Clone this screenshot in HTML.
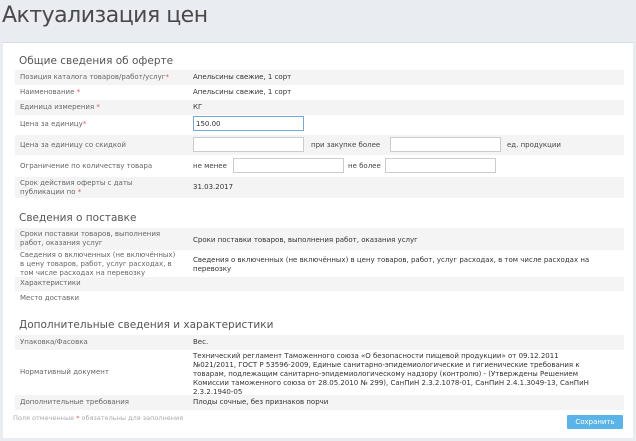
<!DOCTYPE html>
<html><head><meta charset="utf-8"><style>
*{margin:0;padding:0;box-sizing:border-box}
body{width:636px;height:441px;overflow:hidden;background:#e9ecf0;font-family:"DejaVu Sans","Liberation Sans",sans-serif;color:#555;position:relative}
h1{position:absolute;left:2px;top:3px;font-size:22px;font-weight:normal;color:#4a4a4a;font-family:"DejaVu Sans",sans-serif;letter-spacing:-0.5px}
.panel{position:absolute;left:3px;top:42px;width:630px;height:396px;background:#fff;border-top:1px solid #d8dbe0}
.a{position:absolute}
.sec{position:absolute;left:19px;font-size:10.5px;color:#555}
.row{position:absolute;left:15px;width:609px}
.g{background:#f4f4f4}
.l{position:absolute;left:5px;font-size:7px;color:#666;line-height:9px;white-space:nowrap}
.v{position:absolute;left:178px;font-size:7px;color:#333;line-height:9px;white-space:nowrap}
.inp{position:absolute;height:15px;border:1px solid #ccc;background:#fff}
.r{color:#d9534f}
</style></head><body>
<h1>Актуализация цен</h1>
<div class="panel"></div>
<div class="sec" style="top:55px">Общие сведения об оферте</div>
<div class="row g" style="top:70px;height:15px"><div class="l" style="top:3px">Позиция каталога товаров/работ/услуг<span class="r">*</span></div><div class="v" style="top:3px">Апельсины свежие, 1 сорт</div></div>
<div class="row" style="top:85px;height:15px"><div class="l" style="top:3px">Наименование <span class="r">*</span></div><div class="v" style="top:3px">Апельсины свежие, 1 сорт</div></div>
<div class="row g" style="top:100px;height:15px"><div class="l" style="top:3px">Единица измерения <span class="r">*</span></div><div class="v" style="top:3px">КГ</div></div>
<div class="row" style="top:115px;height:19px"><div class="l" style="top:5px">Цена за единицу<span class="r">*</span></div></div>
<div class="inp" style="left:193px;top:116px;width:111px;border-color:#7aa7d6;font-size:7px;color:#333;padding:3px 2px">150.00</div>
<div class="row g" style="top:135px;height:20px"><div class="l" style="top:6px">Цена за единицу со скидкой</div></div>
<div class="inp" style="left:193px;top:137px;width:111px"></div>
<div class="a" style="left:311px;top:141px;font-size:7px;color:#444">при закупке более</div>
<div class="inp" style="left:390px;top:137px;width:111px"></div>
<div class="a" style="left:507px;top:141px;font-size:7px;color:#444">ед. продукции</div>
<div class="row" style="top:157px;height:19px"><div class="l" style="top:5px">Ограничение по количеству товара</div></div>
<div class="a" style="left:193px;top:162px;font-size:7px;color:#444">не менее</div>
<div class="inp" style="left:233px;top:158px;width:111px"></div>
<div class="a" style="left:348px;top:162px;font-size:7px;color:#444">не более</div>
<div class="inp" style="left:385px;top:158px;width:111px"></div>
<div class="row g" style="top:177px;height:21px"><div class="l" style="top:2px">Срок действия оферты с даты<br>публикации по <span class="r">*</span></div><div class="v" style="top:6px">31.03.2017</div></div>
<div class="sec" style="top:212px">Сведения о поставке</div>
<div class="row g" style="top:228px;height:22px"><div class="l" style="top:2px">Сроки поставки товаров, выполнения<br>работ, оказания услуг</div><div class="v" style="top:8px">Сроки поставки товаров, выполнения работ, оказания услуг</div></div>
<div class="row" style="top:250px;height:26px"><div class="l" style="top:1px">Сведения о включенных (не включённых)<br>в цену товаров, работ, услуг расходах, в<br>том числе расходах на перевозку</div><div class="v" style="top:6px">Сведения о включенных (не включённых) в цену товаров, работ, услуг расходах, в том числе расходах на<br>перевозку</div></div>
<div class="row g" style="top:277px;height:14px"><div class="l" style="top:2px">Характеристики</div></div>
<div class="row" style="top:292px;height:14px"><div class="l" style="top:2px">Место доставки</div></div>
<div class="sec" style="top:319px">Дополнительные сведения и характеристики</div>
<div class="row g" style="top:335px;height:15px"><div class="l" style="top:3px">Упаковка/Фасовка</div><div class="v" style="top:3px">Вес.</div></div>
<div class="row" style="top:350px;height:44px"><div class="l" style="top:18px">Нормативный документ</div><div class="v" style="top:2px">Технический регламент Таможенного союза «О безопасности пищевой продукции» от 09.12.2011<br>№021/2011, ГОСТ Р 53596-2009, Единые санитарно-эпидемиологические и гигиенические требования к<br>товарам, подлежащим санитарно-эпидемиологическому надзору (контролю) - (Утверждены Решением<br>Комиссии таможенного союза от 28.05.2010 № 299), СанПиН 2.3.2.1078-01, СанПиН 2.4.1.3049-13, СанПиН<br>2.3.2.1940-05</div></div>
<div class="row g" style="top:395px;height:15px"><div class="l" style="top:3px">Дополнительные требования</div><div class="v" style="top:3px">Плоды сочные, без признаков порчи</div></div>
<div class="a" style="left:13px;top:414px;font-size:6.5px;color:#aaa">Поля отмеченные <span class="r">*</span> обязательны для заполнения</div>
<div class="a" style="left:567px;top:415px;width:56px;height:14px;background:#5bb4e8;color:#fff;font-size:7px;text-align:center;line-height:14px;border-radius:1px">Сохранить</div>
</body></html>
